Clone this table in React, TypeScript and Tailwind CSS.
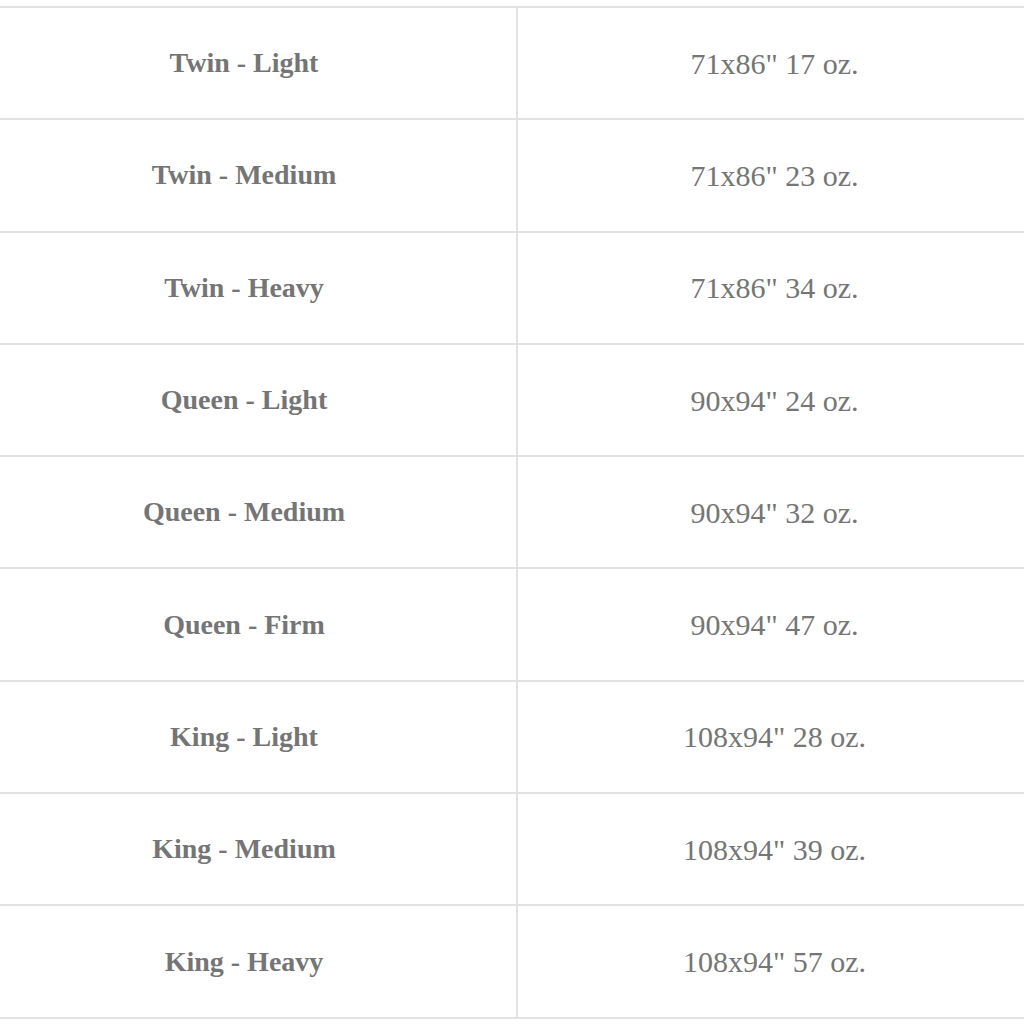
const rows: [string, string][] = [
  ["Twin - Light", "71x86\" 17 oz."],
  ["Twin - Medium", "71x86\" 23 oz."],
  ["Twin - Heavy", "71x86\" 34 oz."],
  ["Queen - Light", "90x94\" 24 oz."],
  ["Queen - Medium", "90x94\" 32 oz."],
  ["Queen - Firm", "90x94\" 47 oz."],
  ["King - Light", "108x94\" 28 oz."],
  ["King - Medium", "108x94\" 39 oz."],
  ["King - Heavy", "108x94\" 57 oz."],
];

export default function App() {
  return (
    <div className="h-[1024px] w-[1024px] overflow-hidden bg-white pt-[6px]">
      <div
        className="w-[1031px] border-t-2 border-[#e2e2e2] text-[#757575]"
        style={{ fontFamily: '"Liberation Serif", "Times New Roman", serif' }}
      >
        {rows.map(([size, spec]) => (
          <div
            key={size}
            className="grid h-[112.3px] grid-cols-[518px_1fr] border-b-2 border-[#e2e2e2]"
          >
            <div className="flex items-center justify-center border-r-2 border-[#e2e2e2] pr-[28px] text-[28px] font-bold">
              {size}
            </div>
            <div className="flex items-center justify-center text-[30px]">
              {spec}
            </div>
          </div>
        ))}
      </div>
    </div>
  );
}
